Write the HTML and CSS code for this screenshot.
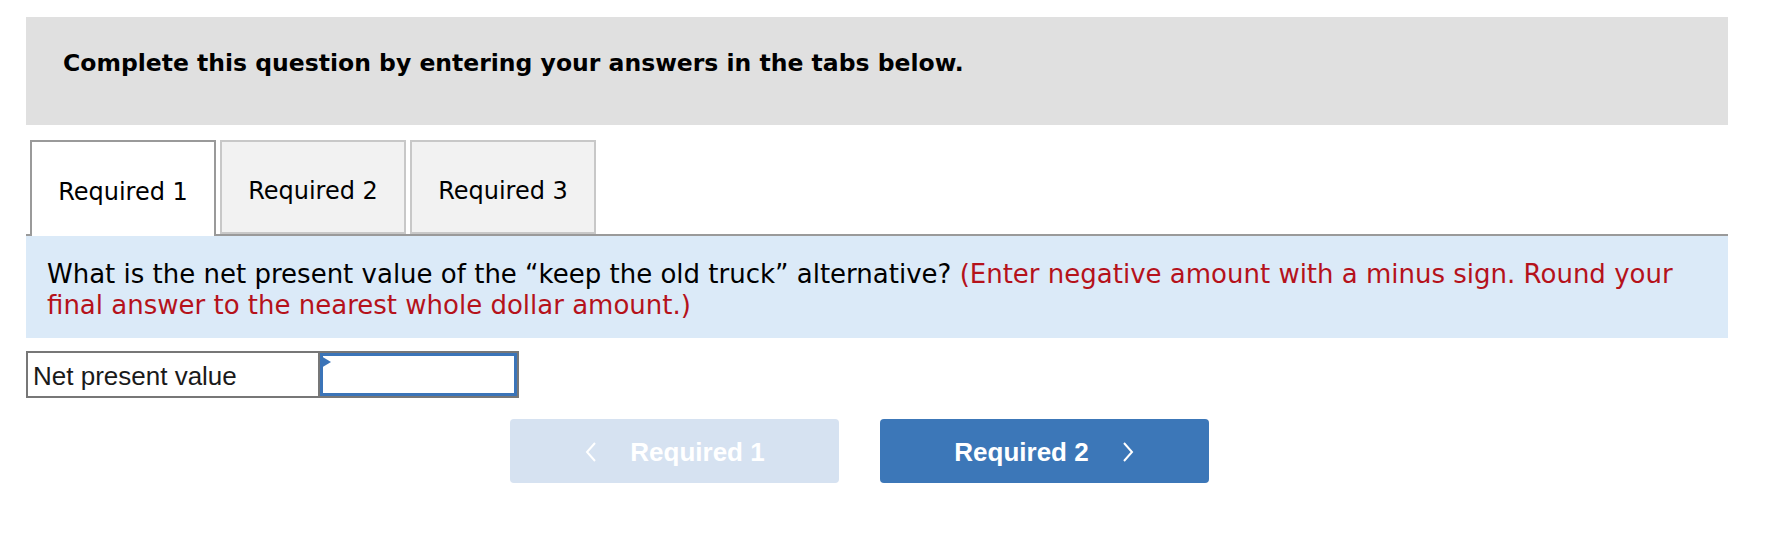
FILE: index.html
```html
<!DOCTYPE html>
<html lang="en">
<head>
<meta charset="utf-8">
<title>Question</title>
<link rel="stylesheet" href="styles.css">
</head>
<body>
<div class="page">
  <div class="instructions">Complete this question by entering your answers in the tabs below.</div>

  <div class="tabs">
    <div class="tab tab-active">Required 1</div>
    <div class="tab">Required 2</div>
    <div class="tab">Required 3</div>
  </div>

  <div class="question">
    What is the net present value of the “keep the old truck” alternative? <span class="hint">(Enter negative amount with a minus sign. Round your final answer to the nearest whole dollar amount.)</span>
  </div>

  <div class="answer-row">
    <div class="answer-label">Net present value</div>
    <div class="answer-cell">
      <span class="marker"></span>
      <div class="answer-input"></div>
    </div>
  </div>

  <div class="nav">
    <button class="nav-btn nav-prev">
      <svg class="chev" width="14" height="22" viewBox="0 0 14 22"><path d="M11 2 L3 11 L11 20" fill="none" stroke="#ffffff" stroke-width="2"/></svg>
      <span>Required 1</span>
    </button>
    <button class="nav-btn nav-next">
      <span>Required 2</span>
      <svg class="chev" width="14" height="22" viewBox="0 0 14 22"><path d="M3 2 L11 11 L3 20" fill="none" stroke="#ffffff" stroke-width="2"/></svg>
    </button>
  </div>
</div>
</body>
</html>
```

FILE: styles.css
```css
html, body {
  margin: 0;
  padding: 0;
  background: #ffffff;
}

.page {
  width: 1702px;
  margin-left: 26px;
  padding-top: 17px;
  font-family: "DejaVu Sans", Verdana, sans-serif;
  color: #000;
}

.instructions {
  background: #e0e0e0;
  height: 108px;
  box-sizing: border-box;
  padding: 30px 0 0 37px;
  font-size: 23.5px;
  line-height: 32px;
  font-weight: bold;
}

.tabs {
  margin-top: 15px;
  display: flex;
  gap: 4px;
  padding-left: 4px;
  border-bottom: 2px solid #9a9a9a;
  height: 94px;
}

.tab {
  box-sizing: border-box;
  width: 186px;
  height: 94px;
  border: 2px solid #c8c8c8;
  background: #f2f2f2;
  display: flex;
  align-items: center;
  justify-content: center;
  font-size: 24px;
  padding-top: 8px;
}

.tab-active {
  height: 96px;
  border-color: #9a9a9a;
  border-bottom: none;
  background: #ffffff;
  position: relative;
  z-index: 1;
  padding-bottom: 2px;
}

.question {
  background: #dbeaf8;
  padding: 23px 30px 17px 21px;
  font-size: 26px;
  line-height: 31px;
}

.hint {
  color: #b5121b;
}

.answer-row {
  margin-top: 13px;
  display: flex;
  width: 493px;
  height: 47px;
  box-sizing: border-box;
  border: 2px solid #777777;
  font-family: "Liberation Sans", Arial, sans-serif;
}

.answer-label {
  border-right: 2px solid #777777;
  padding: 4px 0 0 5px;
  box-sizing: border-box;
  width: 292px;
  font-size: 26px;
  line-height: 38px;
  color: #1a1a1a;
}

.answer-cell {
  flex: 1;
  position: relative;
  display: flex;
}

.answer-input {
  flex: 1;
  border: 3px solid #3b74b8;
  background: #fff;
}

.marker {
  position: absolute;
  left: 1px;
  top: 3px;
  width: 0;
  height: 0;
  border-top: 6px solid transparent;
  border-bottom: 6px solid transparent;
  border-left: 10px solid #3b74b8;
}

.nav {
  margin-top: 21px;
  padding-left: 484px;
  display: flex;
  gap: 41px;
}

.nav-btn {
  width: 329px;
  height: 64px;
  border: none;
  border-radius: 4px;
  color: #ffffff;
  font-family: "Liberation Sans", Arial, sans-serif;
  font-weight: bold;
  font-size: 26px;
  display: flex;
  align-items: center;
  justify-content: center;
  padding: 2px 0 0 0;
}

.nav-prev {
  background: #d6e2f1;
  gap: 32px;
}

.nav-next {
  background: #3c77b8;
  gap: 32px;
}

.chev {
  display: block;
}
```
